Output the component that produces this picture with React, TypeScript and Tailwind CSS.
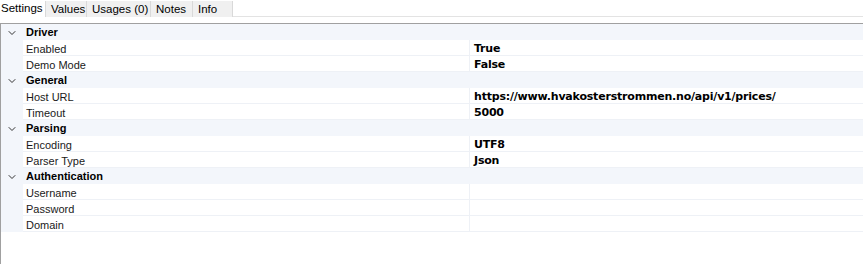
import { ChevronDown } from 'lucide-react'

type Prop = { name: string; value?: string }
type Category = { title: string; props: Prop[] }

const categories: Category[] = [
  {
    title: 'Driver',
    props: [
      { name: 'Enabled', value: 'True' },
      { name: 'Demo Mode', value: 'False' },
    ],
  },
  {
    title: 'General',
    props: [
      { name: 'Host URL', value: 'https://www.hvakosterstrommen.no/api/v1/prices/' },
      { name: 'Timeout', value: '5000' },
    ],
  },
  {
    title: 'Parsing',
    props: [
      { name: 'Encoding', value: 'UTF8' },
      { name: 'Parser Type', value: 'Json' },
    ],
  },
  {
    title: 'Authentication',
    props: [{ name: 'Username' }, { name: 'Password' }, { name: 'Domain' }],
  },
]

const tabs = [
  { label: 'Settings', w: 'w-[45px]' },
  { label: 'Values', w: 'w-[42px]' },
  { label: 'Usages (0)', w: 'w-[64px]' },
  { label: 'Notes', w: 'w-[42px]' },
  { label: 'Info', w: 'w-[40px]' },
]

export default function App() {
  return (
    <div className="w-[863px] h-[264px] bg-white text-[11px] text-black font-['Liberation_Sans',Arial,sans-serif] overflow-hidden">
      {/* Tab strip */}
      <div className="flex h-[17px] border-b border-[#e3e3e3]">
        {tabs.map((t, i) =>
          i === 0 ? (
            <div key={t.label} className={`${t.w} h-[17px] pl-[1px] pt-[1px] bg-white text-[11.5px] leading-[14px] -mb-px`}>
              {t.label}
            </div>
          ) : (
            <div
              key={t.label}
              className={`${t.w} mt-[1px] h-[16px] pl-[5px] pt-[1px] bg-[#f0f0f0] border-r border-[#d9d9d9] text-[11.5px] leading-[14px] ${i === 1 ? 'border-l' : ''}`}
            >
              {t.label}
            </div>
          ),
        )}
      </div>

      {/* Property grid */}
      <div className="mt-[6px] border-t border-l border-[#a0a0a0] h-[241px]">
        {categories.map((c) => (
          <div key={c.title}>
            <div className="flex h-[16px] items-center bg-[#f3f6fb]">
              <div className="w-[22px] flex justify-center pt-[1px]">
                <ChevronDown className="w-[12px] h-[12px] text-[#333]" strokeWidth={2} />
              </div>
              <span className="pl-[3px] pt-[1px] font-bold leading-[15px]">{c.title}</span>
            </div>
            {c.props.map((p) => (
              <div key={p.name} className="flex h-[16px] bg-[#f3f6fb]">
                <div className="w-[22px]" />
                <div className="flex-1 flex bg-white border-b border-[#eef1f6]">
                  <div className="w-[447px] pl-[3px] pt-[3px] leading-[12px] text-[#1a1a1a] border-r border-[#eef1f6]">
                    {p.name}
                  </div>
                  <div className="flex-1 pl-[4px] pt-[3px] leading-[12px] font-bold text-[11px] font-['DejaVu_Sans',sans-serif] tracking-[-0.2px]">
                    {p.value}
                  </div>
                </div>
              </div>
            ))}
          </div>
        ))}
      </div>
    </div>
  )
}
